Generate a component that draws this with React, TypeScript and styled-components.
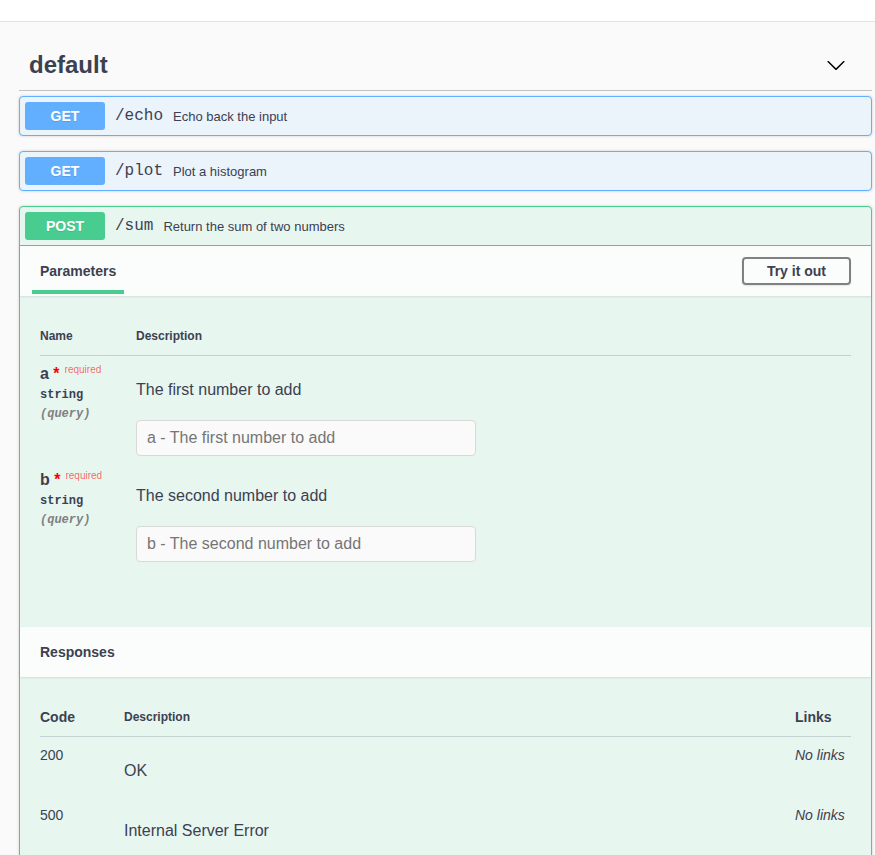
import * as React from 'react';
import styled, { createGlobalStyle, css } from 'styled-components';

type Method = 'get' | 'post';

const methodColors: Record<Method, { main: string; bg: string }> = {
  get: { main: '#61affe', bg: '#ebf3fb' },
  post: { main: '#49cc90', bg: '#e8f6f0' },
};

const GlobalStyle = createGlobalStyle`
  html, body {
    margin: 0;
    padding: 0;
    overflow: hidden;
    background: #fafafa;
    font-family: "Liberation Sans", Arial, sans-serif;
    color: #3b4151;
  }
  * { box-sizing: border-box; }
`;

const TopBar = styled.div`
  height: 22px;
  background: #fff;
  border-bottom: 1px solid #e3e3e3;
`;

const Wrapper = styled.div`
  padding: 18px 3px 0 19px;
`;

const TagHeader = styled.div`
  display: flex;
  align-items: center;
  justify-content: space-between;
  padding: 10px 26px 10px 10px;
  margin-bottom: 5px;
  border-bottom: 1px solid rgba(59, 65, 81, 0.3);
`;

const TagTitle = styled.h3`
  margin: 0;
  font-size: 24px;
  line-height: 30px;
  font-weight: 700;
  color: #3b4151;
`;

const Opblock = styled.div<{ $method: Method }>`
  margin-bottom: 15px;
  border: 1px solid ${(p) => methodColors[p.$method].main};
  border-radius: 4px;
  background: ${(p) => methodColors[p.$method].bg};
  box-shadow: 0 0 3px rgba(0, 0, 0, 0.19);
`;

const Summary = styled.div<{ $method: Method; $open?: boolean }>`
  display: flex;
  align-items: center;
  height: 38px;
  padding: 0 5px;
  ${(p) =>
    p.$open &&
    css`
      height: 39px;
      border-bottom: 1px solid ${methodColors[p.$method].main};
    `}
`;

const MethodBadge = styled.span<{ $method: Method }>`
  min-width: 80px;
  padding: 6px 0;
  font-size: 14px;
  line-height: 16px;
  font-weight: 700;
  text-align: center;
  color: #fff;
  border-radius: 3px;
  text-shadow: 0 1px 0 rgba(0, 0, 0, 0.1);
  background: ${(p) => methodColors[p.$method].main};
`;

const Path = styled.span`
  padding: 0 10px;
  font-family: "Liberation Mono", "Courier New", monospace;
  font-size: 16px;
  font-weight: 400;
  color: #3b4151;
`;

const SummaryDesc = styled.span`
  font-size: 13px;
  color: #3b4151;
`;

const SectionHeader = styled.div`
  display: flex;
  align-items: stretch;
  justify-content: space-between;
  min-height: 50px;
  padding: 0 20px 0 12px;
  background: rgba(255, 255, 255, 0.8);
  box-shadow: 0 1px 2px rgba(0, 0, 0, 0.1);
`;

const PlainHeader = styled(SectionHeader)`
  align-items: center;
  padding: 0 20px;
`;

const Tab = styled.div`
  display: flex;
  align-items: center;
  padding: 5px 8px 0;
  margin-bottom: 2px;
  border-bottom: 4px solid #49cc90;
`;

const HeaderTitle = styled.h4`
  margin: 0;
  font-size: 14px;
  font-weight: 700;
  color: #3b4151;
`;

const TryButton = styled.button`
  align-self: center;
  padding: 4px 23px;
  font-family: inherit;
  font-size: 14px;
  line-height: 16px;
  font-weight: 700;
  color: #3b4151;
  background: transparent;
  border: 2px solid #808080;
  border-radius: 4px;
  box-shadow: 0 1px 2px rgba(0, 0, 0, 0.1);
`;

const TableContainer = styled.div<{ $bottom: number }>`
  padding: 20px 20px ${(p) => p.$bottom}px;
`;

const Grid = styled.div<{ $cols: string }>`
  display: grid;
  grid-template-columns: ${(p) => p.$cols};
`;

const HeadRow = styled(Grid)`
  align-items: center;
  border-bottom: 1px solid rgba(59, 65, 81, 0.2);
`;

const Th = styled.div<{ $size?: number }>`
  padding: 12px 0 11px;
  font-size: ${(p) => p.$size || 12}px;
  line-height: 16px;
  font-weight: 700;
  color: #3b4151;
`;

const ParamRow = styled(Grid)`
  padding-top: 9px;
`;

const ParamName = styled.div`
  font-size: 16px;
  line-height: 18px;
  font-weight: 700;
`;

const Star = styled.span`
  color: red;
`;

const Required = styled.span`
  padding: 5px;
  font-size: 10px;
  line-height: 0;
  font-weight: 400;
  vertical-align: 6px;
  color: rgba(255, 0, 0, 0.6);
`;

const ParamType = styled.div`
  padding: 5px 0;
  font-family: "Liberation Mono", "Courier New", monospace;
  font-size: 12px;
  line-height: 14px;
  font-weight: 600;
`;

const ParamIn = styled.div`
  font-family: "Liberation Mono", "Courier New", monospace;
  font-size: 12px;
  line-height: 14px;
  font-weight: 600;
  font-style: italic;
  color: #808080;
`;

const Markdown = styled.p`
  margin: 16px 0 21px;
  font-size: 16px;
  line-height: 18px;
  color: #3b4151;
`;

const TextInput = styled.input`
  display: block;
  width: 100%;
  max-width: 340px;
  margin: 5px 0 6px;
  padding: 8px 10px;
  font-family: inherit;
  font-size: 16px;
  line-height: 18px;
  color: #3b4151;
  background: #fafafa;
  border: 1px solid #d9d9d9;
  border-radius: 4px;
  outline: none;

  &::placeholder {
    color: #757575;
  }
`;

const ResponseRow = styled(Grid)`
  padding: 10px 0 0;
`;

const Code = styled.div`
  font-size: 14px;
  line-height: 16px;
`;

const ResponseDesc = styled.p`
  margin: 15px 0 17px;
  font-size: 16px;
  line-height: 18px;
`;

const NoLinks = styled.i`
  font-size: 14px;
  line-height: 16px;
`;

const Chevron = () => (
  <svg width="20" height="20" viewBox="0 0 20 20" fill="#000">
    <path d="M17.418 6.109c.272-.268.709-.268.979 0s.271.701 0 .969l-7.908 7.83c-.27.268-.707.268-.979 0l-7.908-7.830c-.27-.268-.27-.701 0-.969.271-.268.709-.268.979 0L10 13.25l7.418-7.141z" />
  </svg>
);

const params = [
  { name: 'a', desc: 'The first number to add' },
  { name: 'b', desc: 'The second number to add' },
];

const responses = [
  { code: '200', desc: 'OK' },
  { code: '500', desc: 'Internal Server Error' },
];

const responseCols = '84px 1fr 56px';

const App = () => (
  <>
    <GlobalStyle />
    <TopBar />
    <Wrapper>
      <TagHeader>
        <TagTitle>default</TagTitle>
        <Chevron />
      </TagHeader>

      <Opblock $method="get">
        <Summary $method="get">
          <MethodBadge $method="get">GET</MethodBadge>
          <Path>/echo</Path>
          <SummaryDesc>Echo back the input</SummaryDesc>
        </Summary>
      </Opblock>

      <Opblock $method="get">
        <Summary $method="get">
          <MethodBadge $method="get">GET</MethodBadge>
          <Path>/plot</Path>
          <SummaryDesc>Plot a histogram</SummaryDesc>
        </Summary>
      </Opblock>

      <Opblock $method="post">
        <Summary $method="post" $open>
          <MethodBadge $method="post">POST</MethodBadge>
          <Path>/sum</Path>
          <SummaryDesc>Return the sum of two numbers</SummaryDesc>
        </Summary>

        <SectionHeader>
          <Tab>
            <HeaderTitle>Parameters</HeaderTitle>
          </Tab>
          <TryButton>Try it out</TryButton>
        </SectionHeader>

        <TableContainer $bottom={59}>
          <HeadRow $cols="96px 1fr">
            <Th>Name</Th>
            <Th>Description</Th>
          </HeadRow>
          {params.map((p) => (
            <ParamRow $cols="96px 1fr" key={p.name}>
              <div>
                <ParamName>
                  {p.name}
                  <Star>&nbsp;*</Star>
                  <Required>required</Required>
                </ParamName>
                <ParamType>string</ParamType>
                <ParamIn>(query)</ParamIn>
              </div>
              <div>
                <Markdown>{p.desc}</Markdown>
                <TextInput placeholder={`${p.name} - ${p.desc}`} />
              </div>
            </ParamRow>
          ))}
        </TableContainer>

        <PlainHeader>
          <HeaderTitle>Responses</HeaderTitle>
        </PlainHeader>

        <TableContainer $bottom={20}>
          <HeadRow $cols={responseCols}>
            <Th $size={14}>Code</Th>
            <Th>Description</Th>
            <Th $size={14}>Links</Th>
          </HeadRow>
          {responses.map((r) => (
            <ResponseRow $cols={responseCols} key={r.code}>
              <Code>{r.code}</Code>
              <ResponseDesc>{r.desc}</ResponseDesc>
              <NoLinks>No links</NoLinks>
            </ResponseRow>
          ))}
        </TableContainer>
      </Opblock>
    </Wrapper>
  </>
);

export default App;
